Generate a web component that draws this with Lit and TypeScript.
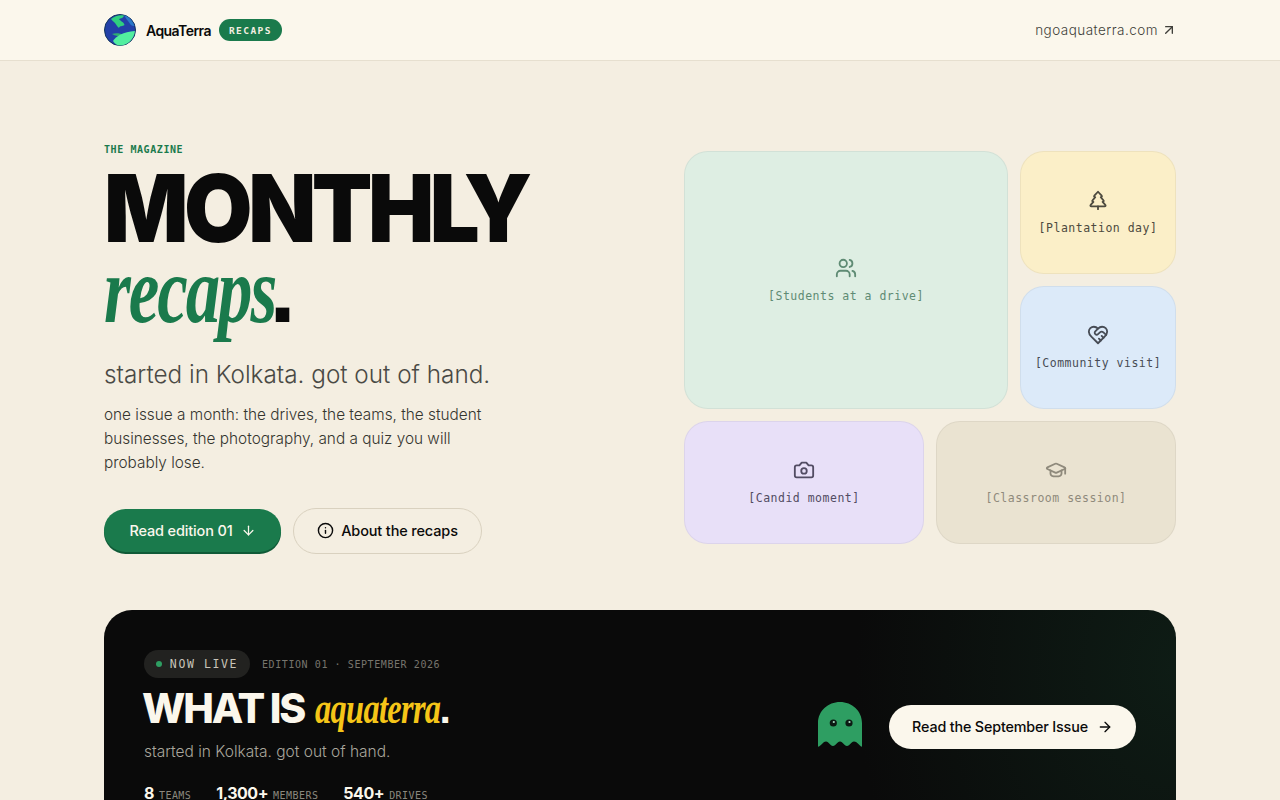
import { LitElement, html, css, svg } from 'lit';
import { customElement } from 'lit/decorators.js';

const icons = {
    users: svg`<path d="M16 21v-2a4 4 0 0 0-4-4H6a4 4 0 0 0-4 4v2"/><circle cx="9" cy="7" r="4"/><path d="M22 21v-2a4 4 0 0 0-3-3.87"/><path d="M16 3.13a4 4 0 0 1 0 7.75"/>`,
    tree: svg`<path d="m17 14 3 3.3a1 1 0 0 1-.7 1.7H4.7a1 1 0 0 1-.7-1.7L7 14h-.3a1 1 0 0 1-.7-1.7L9 9h-.2A1 1 0 0 1 8 7.3L12 3l4 4.3a1 1 0 0 1-.8 1.7H15l3 3.3a1 1 0 0 1-.7 1.7H17Z"/><path d="M12 22v-3"/>`,
    heart: svg`<path d="M19 14c1.49-1.46 3-3.21 3-5.5A5.5 5.5 0 0 0 16.5 3c-1.76 0-3 .5-4.5 2-1.5-1.5-2.74-2-4.5-2A5.5 5.5 0 0 0 2 8.5c0 2.3 1.5 4.05 3 5.5l7 7Z"/><path d="M12 5 9.04 7.96a2.17 2.17 0 0 0 0 3.08c.82.82 2.13.85 3 .07l2.07-1.9a2.82 2.82 0 0 1 3.79 0l2.96 2.66"/><path d="m18 15-2-2"/><path d="m15 18-2-2"/>`,
    camera: svg`<path d="M14.5 4h-5L7 7H4a2 2 0 0 0-2 2v9a2 2 0 0 0 2 2h16a2 2 0 0 0 2-2V9a2 2 0 0 0-2-2h-3l-2.5-3z"/><circle cx="12" cy="13" r="3"/>`,
    cap: svg`<path d="M21.42 10.922a1 1 0 0 0-.019-1.838L12.83 5.18a2 2 0 0 0-1.66 0L2.6 9.08a1 1 0 0 0 0 1.832l8.57 3.908a2 2 0 0 0 1.66 0z"/><path d="M22 10v6"/><path d="M6 12.5V16a6 3 0 0 0 12 0v-3.5"/>`,
    info: svg`<circle cx="12" cy="12" r="10"/><path d="M12 16v-4"/><path d="M12 8h.01"/>`,
    down: svg`<path d="M12 5v14"/><path d="m19 12-7 7-7-7"/>`,
    right: svg`<path d="M5 12h14"/><path d="m12 5 7 7-7 7"/>`,
    upRight: svg`<path d="M7 7h10v10"/><path d="M7 17 17 7"/>`,
};

const icon = (name: keyof typeof icons, size: number) => html`
    <svg viewBox="0 0 24 24" width=${size} height=${size} fill="none" stroke="currentColor"
        stroke-width="2" stroke-linecap="round" stroke-linejoin="round" aria-hidden="true">${icons[name]}</svg>
`;

const tiles = [
    { cls: 'mint', icon: 'users', label: '[Students at a drive]' },
    { cls: 'butter', icon: 'tree', label: '[Plantation day]' },
    { cls: 'sky', icon: 'heart', label: '[Community visit]' },
    { cls: 'lilac', icon: 'camera', label: '[Candid moment]' },
    { cls: 'sand', icon: 'cap', label: '[Classroom session]' },
] as const;

const stats = [
    { value: '8', label: 'TEAMS' },
    { value: '1,300+', label: 'MEMBERS' },
    { value: '540+', label: 'DRIVES' },
];

@customElement('app-root')
export class AppRoot extends LitElement {
    static override styles = css`
        :host {
            display: block;
            background: #f4eee1;
            color: #0a0a0a;
            font-family: 'Inter', 'Noto Sans', sans-serif;
        }
        .mono { font-family: 'DejaVu Sans Mono', 'Liberation Mono', monospace; }

        header {
            height: 60px;
            background: #fbf7ec;
            border-bottom: 1px solid #e6dfcf;
            padding: 0 104px;
            display: flex;
            align-items: center;
            justify-content: space-between;
        }
        .brand { display: flex; align-items: center; }
        .brand svg { display: block; }
        .name {
            margin-left: 10px;
            font-size: 14px;
            font-weight: 600;
            letter-spacing: -0.04em;
        }
        .badge {
            margin-left: 8px;
            height: 22px;
            width: 63px;
            border-radius: 11px;
            background: #1a7a4c;
            color: #f4eee1;
            font-size: 9.5px;
            font-weight: 700;
            letter-spacing: 0.15em;
            display: flex;
            align-items: center;
            justify-content: center;
        }
        .site {
            display: flex;
            align-items: center;
            gap: 3px;
            margin-right: -1px;
            font-size: 13.5px;
            font-weight: 300;
            letter-spacing: 0.035em;
            color: #3f3f3a;
        }

        .hero {
            padding: 80px 104px 56px;
            display: grid;
            grid-template-columns: 1fr 492px;
            align-items: center;
        }
        .intro { padding-top: 1px; }
        .eyebrow {
            font-size: 10px;
            font-weight: 700;
            letter-spacing: 0.58px;
            color: #1a7a4c;
            line-height: 16px;
        }
        h1 { margin: 0; font-weight: 900; }
        .big {
            display: block;
            padding-top: 2px;
            font-size: 94px;
            line-height: 96px;
            letter-spacing: -0.05em;
            transform: scaleX(0.94);
            transform-origin: left;
        }
        .script-line {
            display: block;
            margin-top: -17px;
            font-size: 96px;
            line-height: 96px;
        }
        .script {
            display: inline-block;
            font-family: 'Liberation Serif', serif;
            font-style: italic;
            font-weight: 700;
            color: #1a7a4c;
        }
        .script-line .script {
            letter-spacing: -0.03em;
            transform: scaleX(0.717);
            transform-origin: left;
            margin-right: -73.5px;
        }
        .stop { font-family: 'Liberation Sans', sans-serif; font-weight: 700; }
        .tag {
            margin: 20px 0 0;
            font-size: 24.3px;
            line-height: 32px;
            font-weight: 300;
            color: #4a4a45;
        }
        .lead {
            margin: 13px 0 0;
            max-width: 400px;
            font-size: 15.35px;
            line-height: 24px;
            font-weight: 300;
            color: #35352f;
        }
        .actions { margin-top: 33px; display: flex; align-items: center; gap: 12px; }
        .btn {
            display: flex;
            align-items: center;
            justify-content: center;
            border-radius: 23px;
            font-size: 14.5px;
            font-weight: 500;
            letter-spacing: -0.01em;
        }
        .primary {
            width: 177px;
            height: 43px;
            margin-bottom: 1px;
            gap: 8px;
            background: #1a7a4c;
            color: #fbf7ec;
            box-shadow: 0 2px 0 #0f5a37;
        }
        .ghost {
            width: 187px;
            height: 43px;
            padding-bottom: 1px;
            gap: 7px;
            border: 1px solid #d9d1bf;
        }

        .tiles {
            margin-top: -1px;
            display: grid;
            grid-template-columns: repeat(6, 1fr);
            grid-auto-rows: 123px;
            gap: 12px;
        }
        .tile {
            border-radius: 24px;
            border: 1px solid #0000000d;
            display: flex;
            flex-direction: column;
            align-items: center;
            justify-content: center;
            gap: 10px;
            font-size: 11.5px;
            letter-spacing: 0.5px;
        }
        .mint { grid-column: span 4; grid-row: span 2; background: #deeee3; color: #5f8b74; }
        .butter { grid-column: span 2; background: #fbefc8; color: #4d4a3f; }
        .sky { grid-column: span 2; background: #dceaf9; color: #474c55; }
        .lilac { grid-column: span 3; background: #e8e0f8; color: #524c63; }
        .sand { grid-column: span 3; background: #eae3d1; color: #8f8a7c; }

        .live-wrap { padding: 0 104px 40px; }
        .live {
            border-radius: 28px;
            padding: 40px;
            display: flex;
            align-items: center;
            justify-content: space-between;
            background:
                radial-gradient(320px 420px at 100% 25%, #0e1c15 0%, #0a0a0a00 100%),
                #0a0a0a;
            color: #fbf7ec;
        }
        .meta { display: flex; align-items: center; gap: 12px; }
        .pill {
            height: 28px;
            width: 106px;
            box-sizing: border-box;
            border-radius: 14px;
            background: #222220;
            color: #c9c5ba;
            font-size: 11.5px;
            letter-spacing: 0.14em;
            display: flex;
            align-items: center;
            justify-content: center;
            gap: 8px;
        }
        .dot { width: 6px; height: 6px; border-radius: 50%; background: #2e9e62; }
        .edition { font-size: 10px; letter-spacing: 0.58px; color: #77756d; }
        h2 {
            margin: 7px 0 0 -2px;
            font-size: 41px;
            line-height: 46px;
            font-weight: 800;
            letter-spacing: -0.053em;
        }
        h2 .script {
            font-size: 44px;
            color: #f5c518;
            letter-spacing: -0.02em;
            transform: scaleX(0.735);
            transform-origin: left;
            margin-left: 4px;
            margin-right: -46px;
        }
        .sub {
            margin: 8px 0 0;
            font-size: 15.5px;
            line-height: 24px;
            font-weight: 300;
            color: #a9a69c;
        }
        .stats { margin-top: 19px; display: flex; gap: 25px; }
        .stat { display: flex; align-items: baseline; gap: 5px; }
        .value { font-size: 16px; font-weight: 700; letter-spacing: -0.03em; }
        .unit { font-size: 10px; letter-spacing: 0.45px; color: #8b887e; }
        .cta { display: flex; align-items: center; gap: 27px; }
        .ghost-mark { margin-bottom: 4px; }
        .read {
            width: 247px;
            height: 44px;
            gap: 9px;
            border-radius: 22px;
            background: #fbf7ec;
            color: #0a0a0a;
            font-size: 14.3px;
        }
    `;

    override render() {
        return html`
            <header>
                <div class="brand">
                    <svg viewBox="0 0 32 32" width="32" height="32" aria-hidden="true">
                        <circle cx="16" cy="16" r="15.500" fill="#2340a8" stroke="#12355c" />
                        <path d="M20 1c5 1.500 9 6 10.500 11-2 .5-4-1-5-3-1.500-2-4-5-5.500-8Z" fill="#2a78c8" />
                        <path d="M7 5c4-3.500 9-4.500 13-3.500-.5 2.500-3 3-5 3.500 1 2 5 3 5.500 6-2 1.500-5 .5-5.500 3-2-1.500-3-4-4.500-5.500C9.500 7.500 8 6.500 7 5Z" fill="#2fd07f" />
                        <path d="M8 20c3-1 8-1 12 1l-1 2c-3-1-8-1-11-3Z" fill="#2fb070" />
                        <path d="M9 27c3-5 10-9 22-10-1 8-7 14.500-15 14.500-3 0-5.500-2-7-4.500Z" fill="#52ee9f" />
                    </svg>
                    <span class="name">AquaTerra</span>
                    <span class="badge mono">RECAPS</span>
                </div>
                <div class="site">ngoaquaterra.com ${icon('upRight', 16)}</div>
            </header>

            <section class="hero">
                <div class="intro">
                    <div class="eyebrow mono">THE MAGAZINE</div>
                    <h1>
                        <span class="big">MONTHLY</span>
                        <span class="script-line"><span class="script">recaps</span><span class="stop">.</span></span>
                    </h1>
                    <p class="tag">started in Kolkata. got out of hand.</p>
                    <p class="lead">one issue a month: the drives, the teams, the student businesses, the photography, and a quiz you will probably lose.</p>
                    <div class="actions">
                        <div class="btn primary">Read edition 01 ${icon('down', 15)}</div>
                        <div class="btn ghost">${icon('info', 17)} About the recaps</div>
                    </div>
                </div>
                <div class="tiles mono">
                    ${tiles.map(
                        (t) => html`
                            <div class="tile ${t.cls}">
                                ${icon(t.icon, 22)}
                                <span>${t.label}</span>
                            </div>
                        `,
                    )}
                </div>
            </section>

            <div class="live-wrap">
                <section class="live">
                    <div>
                        <div class="meta mono">
                            <span class="pill"><span class="dot"></span>NOW LIVE</span>
                            <span class="edition">EDITION 01 · SEPTEMBER 2026</span>
                        </div>
                        <h2>WHAT IS <span class="script">aquaterra</span><span class="stop">.</span></h2>
                        <p class="sub">started in Kolkata. got out of hand.</p>
                        <div class="stats">
                            ${stats.map(
                                (s) => html`
                                    <div class="stat">
                                        <span class="value">${s.value}</span>
                                        <span class="unit mono">${s.label}</span>
                                    </div>
                                `,
                            )}
                        </div>
                    </div>
                    <div class="cta">
                        <svg class="ghost-mark" viewBox="0 0 44 46" width="44" height="46" aria-hidden="true">
                            <path d="M0 21C0 9 10 0 22 0s22 9 22 21v23q0 1-1 .5c-2-1.500-4-5-7-5s-4 4.500-7 4.500-4-4.500-7-4.500-4 4.500-7 4.500-4-4.500-7-4.500-4 3.500-7 5q-1 .5-1-.5Z" fill="#2e9e62" />
                            <circle cx="15.300" cy="21" r="3.600" fill="#0c1a13" />
                            <circle cx="31" cy="21" r="3.600" fill="#0c1a13" />
                            <circle cx="15.800" cy="20" r="1.100" fill="#a8dcc0" />
                            <circle cx="31.500" cy="20" r="1.100" fill="#a8dcc0" />
                        </svg>
                        <div class="btn read">Read the September Issue ${icon('right', 16)}</div>
                    </div>
                </section>
            </div>
        `;
    }
}

declare global {
    interface HTMLElementTagNameMap {
        'app-root': AppRoot;
    }
}
